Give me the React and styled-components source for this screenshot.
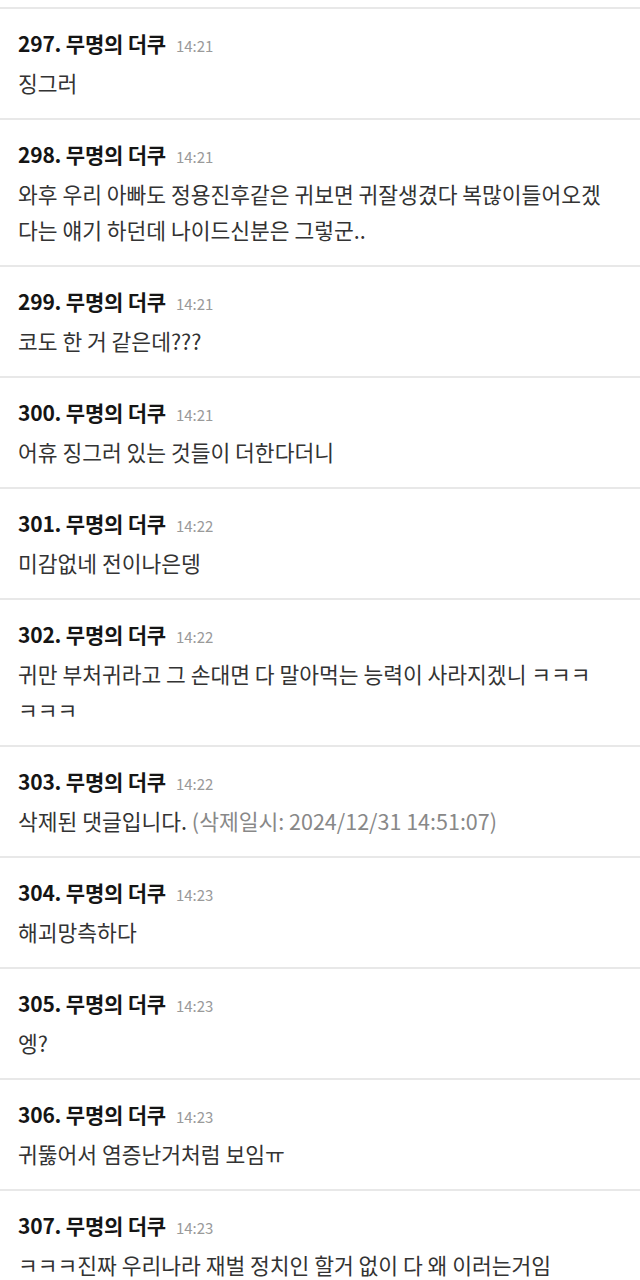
import styled, { createGlobalStyle } from 'styled-components';

const GlobalStyle = createGlobalStyle`
  body {
    margin: 0;
    background: #fff;
    font-family: "Noto Sans CJK KR", "Noto Sans", sans-serif;
  }
`;

const List = styled.ul`
  list-style: none;
  margin: 0;
  padding: 7px 0 0;
`;

const Item = styled.li`
  border-top: 2px solid #e8e8e8;
  padding: 21px 36px 17px 18px;
`;

const Header = styled.div`
  display: flex;
  align-items: baseline;
  gap: 10px;
  height: 26px;
  line-height: 26px;
  white-space: nowrap;
`;

const Author = styled.span`
  font-size: 21px;
  font-weight: 700;
  color: #151515;
  letter-spacing: -0.2px;
`;

const Time = styled.span`
  font-size: 15px;
  color: #9a9a9a;
`;

const Body = styled.p`
  margin: 9px 0 0;
  font-size: 21.5px;
  line-height: 36px;
  color: #333;
`;

const Deleted = styled.span`
  color: #888;
`;

const comments = [
  { no: 297, time: '14:21', text: '징그러' },
  { no: 298, time: '14:21', text: '와후 우리 아빠도 정용진후같은 귀보면 귀잘생겼다 복많이들어오겠다는 얘기 하던데 나이드신분은 그렇군..' },
  { no: 299, time: '14:21', text: '코도 한 거 같은데???' },
  { no: 300, time: '14:21', text: '어휴 징그러 있는 것들이 더한다더니' },
  { no: 301, time: '14:22', text: '미감없네 전이나은뎅' },
  { no: 302, time: '14:22', text: '귀만 부처귀라고 그 손대면 다 말아먹는 능력이 사라지겠니 ㅋㅋㅋㅋㅋㅋ' },
  { no: 303, time: '14:22', deleted: '2024/12/31 14:51:07' },
  { no: 304, time: '14:23', text: '해괴망측하다' },
  { no: 305, time: '14:23', text: '엥?' },
  { no: 306, time: '14:23', text: '귀뚫어서 염증난거처럼 보임ㅠ' },
  { no: 307, time: '14:23', text: 'ㅋㅋㅋ진짜 우리나라 재벌 정치인 할거 없이 다 왜 이러는거임' },
];

const App = () => (
  <>
    <GlobalStyle />
    <List>
      {comments.map((c) => (
        <Item key={c.no}>
          <Header>
            <Author>{c.no}. 무명의 더쿠</Author>
            <Time>{c.time}</Time>
          </Header>
          <Body>
            {c.deleted ? (
              <>
                삭제된 댓글입니다. <Deleted>(삭제일시: {c.deleted})</Deleted>
              </>
            ) : (
              c.text
            )}
          </Body>
        </Item>
      ))}
    </List>
  </>
);

export default App;
